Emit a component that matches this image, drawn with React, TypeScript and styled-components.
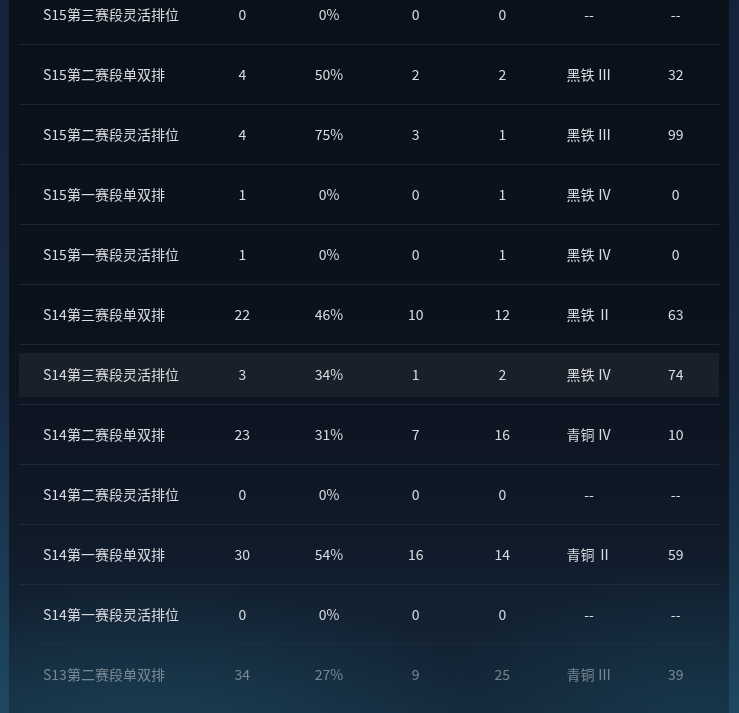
import React from "react";
import styled, { createGlobalStyle } from "styled-components";

const GlobalStyle = createGlobalStyle`
  html, body {
    margin: 0;
    padding: 0;
    height: 100%;
    overflow: hidden;
  }
  body {
    background: linear-gradient(180deg, #15223a 0%, #172a42 55%, #1e4862 100%);
    font-family: "Microsoft YaHei", "Noto Sans CJK SC", "Noto Sans", sans-serif;
  }
`;

const Page = styled.div`
  height: 713px;
  padding: 0 10px 0 9px;
  overflow: hidden;
`;

const Panel = styled.div`
  height: 100%;
  padding: 0 10px;
  overflow: hidden;
  background:
    radial-gradient(ellipse 70% 35% at 20% 105%, rgba(34, 88, 112, 0.5), transparent 70%),
    radial-gradient(ellipse 50% 30% at 95% 100%, rgba(28, 76, 98, 0.4), transparent 70%),
    linear-gradient(180deg, #0b111b 0%, #0c121d 45%, #0f1826 70%, #14283a 100%);
`;

const Table = styled.div`
  margin-top: -15px;
  -webkit-mask-image: linear-gradient(180deg, #000 645px, rgba(0, 0, 0, 0.5) 680px);
  mask-image: linear-gradient(180deg, #000 645px, rgba(0, 0, 0, 0.5) 680px);
`;

const Row = styled.div`
  box-sizing: border-box;
  height: 60px;
  padding: 8px 0 7px;
  border-bottom: 1px solid rgba(40, 52, 68, 0.6);
`;

const RowInner = styled.div<{ $active?: boolean }>`
  display: grid;
  grid-template-columns: 180px repeat(6, 1fr);
  align-items: center;
  height: 44px;
  background: ${(p) => (p.$active ? "#1a2029" : "transparent")};
`;

const Cell = styled.div<{ $name?: boolean }>`
  color: #d9dce1;
  font-size: 14px;
  line-height: 20px;
  padding-bottom: 2px;
  white-space: nowrap;
  text-align: ${(p) => (p.$name ? "left" : "center")};
  padding-left: ${(p) => (p.$name ? "24px" : "0")};
`;

type Season = {
  name: string;
  games: string;
  rate: string;
  wins: string;
  losses: string;
  rank: string;
  points: string;
};

const seasons: Season[] = [
  { name: "S15第三赛段灵活排位", games: "0", rate: "0%", wins: "0", losses: "0", rank: "--", points: "--" },
  { name: "S15第二赛段单双排", games: "4", rate: "50%", wins: "2", losses: "2", rank: "黑铁 Ⅲ", points: "32" },
  { name: "S15第二赛段灵活排位", games: "4", rate: "75%", wins: "3", losses: "1", rank: "黑铁 Ⅲ", points: "99" },
  { name: "S15第一赛段单双排", games: "1", rate: "0%", wins: "0", losses: "1", rank: "黑铁 Ⅳ", points: "0" },
  { name: "S15第一赛段灵活排位", games: "1", rate: "0%", wins: "0", losses: "1", rank: "黑铁 Ⅳ", points: "0" },
  { name: "S14第三赛段单双排", games: "22", rate: "46%", wins: "10", losses: "12", rank: "黑铁 Ⅱ", points: "63" },
  { name: "S14第三赛段灵活排位", games: "3", rate: "34%", wins: "1", losses: "2", rank: "黑铁 Ⅳ", points: "74" },
  { name: "S14第二赛段单双排", games: "23", rate: "31%", wins: "7", losses: "16", rank: "青铜 Ⅳ", points: "10" },
  { name: "S14第二赛段灵活排位", games: "0", rate: "0%", wins: "0", losses: "0", rank: "--", points: "--" },
  { name: "S14第一赛段单双排", games: "30", rate: "54%", wins: "16", losses: "14", rank: "青铜 Ⅱ", points: "59" },
  { name: "S14第一赛段灵活排位", games: "0", rate: "0%", wins: "0", losses: "0", rank: "--", points: "--" },
  { name: "S13第二赛段单双排", games: "34", rate: "27%", wins: "9", losses: "25", rank: "青铜 Ⅲ", points: "39" },
];

const ACTIVE_ROW = 6;

const App: React.FC = () => {
  return (
    <>
      <GlobalStyle />
      <Page>
        <Panel>
          <Table>
            {seasons.map((s, i) => (
              <Row key={s.name}>
                <RowInner $active={i === ACTIVE_ROW}>
                  <Cell $name>{s.name}</Cell>
                  <Cell>{s.games}</Cell>
                  <Cell>{s.rate}</Cell>
                  <Cell>{s.wins}</Cell>
                  <Cell>{s.losses}</Cell>
                  <Cell>{s.rank}</Cell>
                  <Cell>{s.points}</Cell>
                </RowInner>
              </Row>
            ))}
          </Table>
        </Panel>
      </Page>
    </>
  );
};

export default App;
